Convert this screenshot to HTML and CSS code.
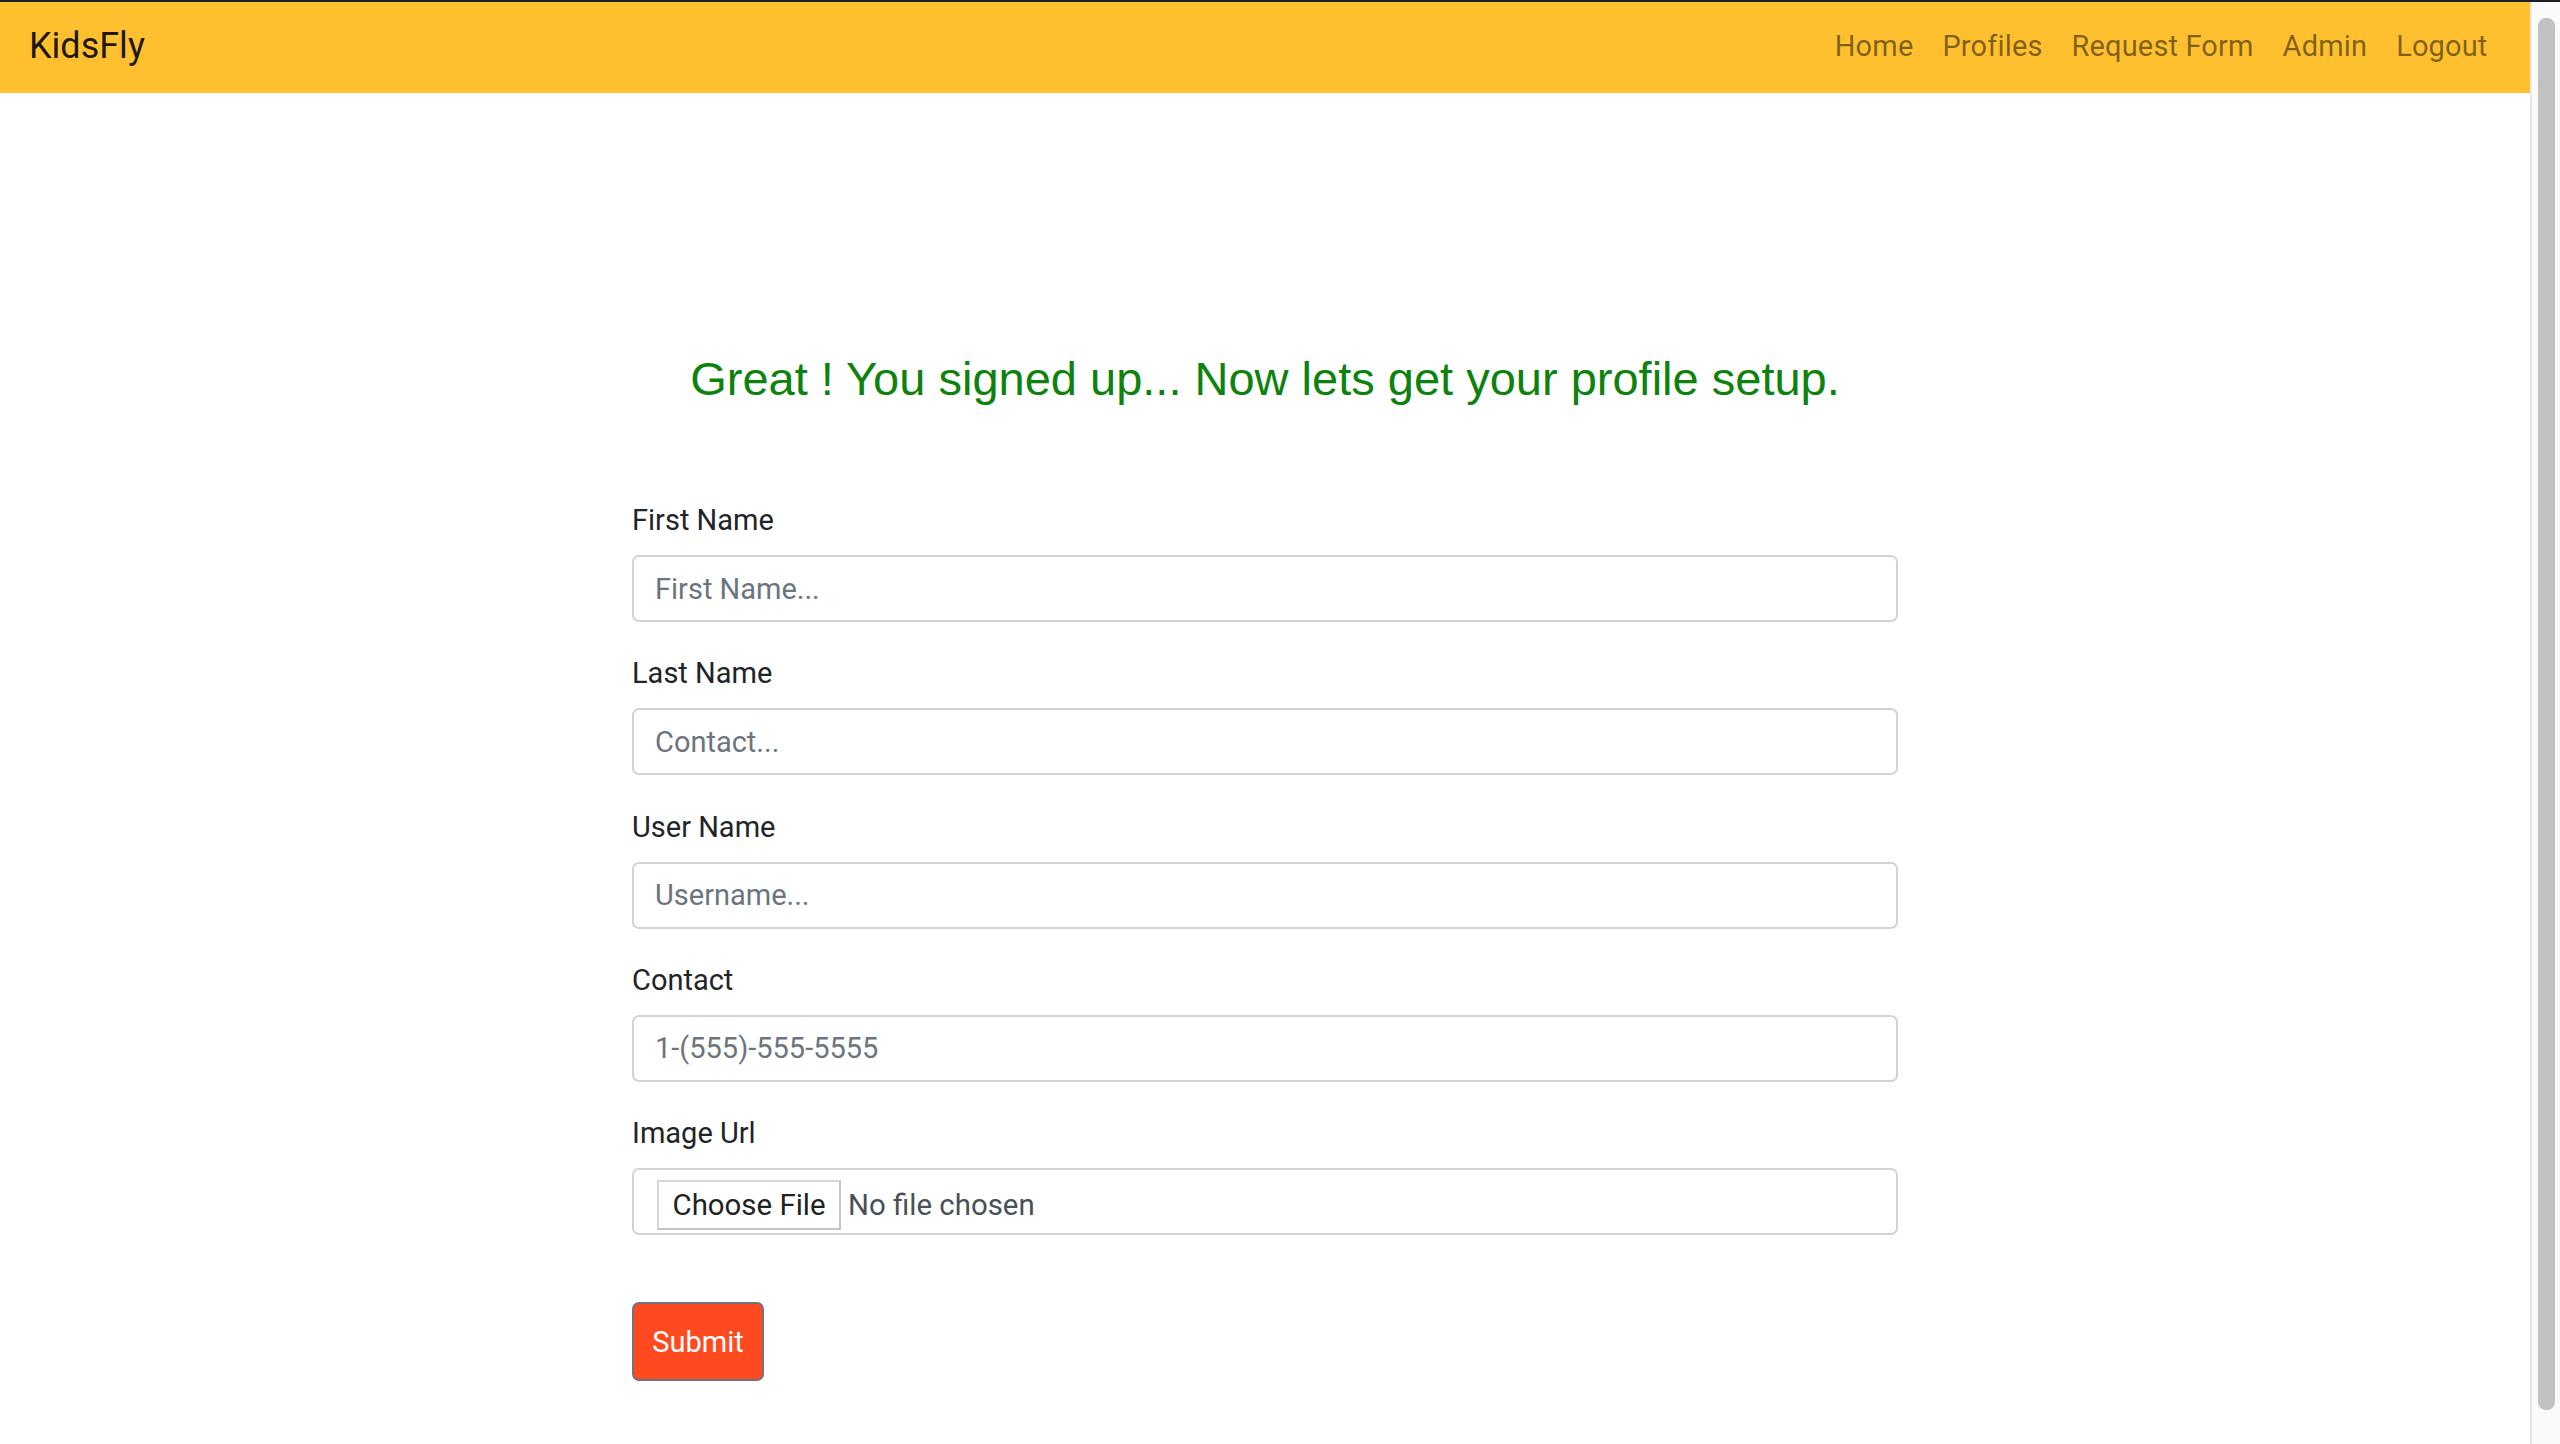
FILE: index.html
```html
<!DOCTYPE html>
<html lang="en">
<head>
<meta charset="utf-8">
<title>KidsFly</title>
<link rel="stylesheet" href="styles.css">
</head>
<body>
<div class="topline"></div>
<div class="frame">
  <div class="page">
    <nav class="navbar">
      <a class="brand" href="#">KidsFly</a>
      <ul class="nav">
        <li><a href="#">Home</a></li>
        <li><a href="#">Profiles</a></li>
        <li><a href="#">Request Form</a></li>
        <li><a href="#">Admin</a></li>
        <li><a href="#">Logout</a></li>
      </ul>
    </nav>
    <main class="content">
      <h2 class="title">Great ! You signed up... Now lets get your profile setup.</h2>
      <form class="form">
        <div class="group">
          <label class="label" for="fn">First Name</label>
          <input class="control" id="fn" type="text" placeholder="First Name...">
        </div>
        <div class="group">
          <label class="label" for="ln">Last Name</label>
          <input class="control" id="ln" type="text" placeholder="Contact...">
        </div>
        <div class="group">
          <label class="label" for="un">User Name</label>
          <input class="control" id="un" type="text" placeholder="Username...">
        </div>
        <div class="group">
          <label class="label" for="ct">Contact</label>
          <input class="control" id="ct" type="text" placeholder="1-(555)-555-5555">
        </div>
        <div class="group">
          <label class="label">Image Url</label>
          <div class="control file-field">
            <span class="file-btn">Choose File</span>
            <span class="file-name">No file chosen</span>
          </div>
        </div>
        <button class="submit" type="button">Submit</button>
      </form>
    </main>
  </div>
  <div class="scrollbar"><div class="thumb"></div></div>
</div>
</body>
</html>
```
FILE: styles.css
```css
* { box-sizing: border-box; }
html, body { margin: 0; padding: 0; }
body {
  width: 2560px;
  height: 1444px;
  overflow: hidden;
  background: #fff;
  font-family: Roboto, "Liberation Sans", sans-serif;
  font-size: 29px;
  color: #212529;
}
.topline { height: 2px; background: #1f1f1f; }
.frame { display: flex; height: 1442px; }
.page { flex: 1; min-width: 0; }
.navbar {
  height: 91px;
  background: #ffc030;
  display: flex;
  align-items: center;
  justify-content: space-between;
  padding: 0 28px 3px 29px;
}
.brand {
  font-size: 36px;
  color: rgba(0,0,0,.9);
  text-decoration: none;
  line-height: 1;
}
.nav { list-style: none; margin: 0; padding: 0; display: flex; }
.nav a {
  display: block;
  padding: 0 14.5px;
  color: rgba(0,0,0,.5);
  text-decoration: none;
  font-size: 29px;
  letter-spacing: 0.15px;
  line-height: 44px;
}
.content { width: 1266px; margin: 0 auto; padding-top: 258px; }
.title {
  margin: 0 0 92px;
  text-align: center;
  font-family: "Liberation Sans", Arial, sans-serif;
  font-weight: 400;
  font-size: 47px;
  line-height: 56px;
  color: #0d820d;
}
.group { margin-bottom: 30.25px; }
.label { display: block; line-height: 42px; margin-bottom: 14px; }
.control {
  display: block;
  width: 100%;
  height: 67px;
  border: 2px solid #ced4da;
  border-radius: 7px;
  padding: 0 21px;
  font-family: inherit;
  font-size: 29px;
  color: #495057;
  background: #fff;
  outline: none;
}
.control::placeholder { color: #6c757d; }
.file-field {
  display: flex;
  align-items: flex-start;
  padding: 10px 0 0 23px;
  font-size: 29.4px;
}
.file-btn {
  height: 50px;
  padding: 0 13.5px;
  border: 2px solid #c4c4c4;
  border-top-color: #d6d6d6;
  border-left-color: #d6d6d6;
  display: flex;
  align-items: center;
  color: #222;
  background: #fff;
}
.file-name { margin-left: 7px; color: #495057; line-height: 50px; }
.submit {
  margin-top: 37px;
  width: 132px;
  height: 79px;
  background: #ff4a1f;
  border: 2px solid #6c757d;
  border-radius: 7px;
  color: #fff;
  font-family: inherit;
  font-size: 29px;
  padding: 0;
}
.scrollbar {
  width: 30px;
  background: #fafafa;
  border-left: 2px solid #e8e8e8;
  padding: 16px 5px 34px 6px;
}
.thumb { height: 100%; background: #c1c1c1; border-radius: 8px; }
```
